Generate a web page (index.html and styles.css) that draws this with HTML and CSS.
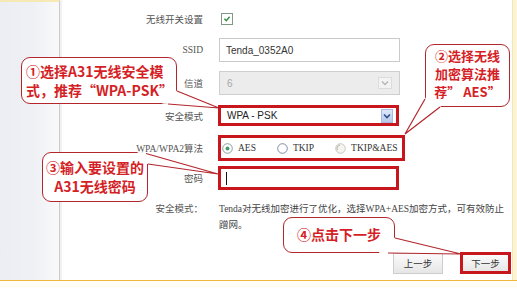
FILE: index.html
```html
<!DOCTYPE html>
<html lang="zh-CN">
<head>
    <meta charset="UTF-8">
    <link rel="stylesheet" href="styles.css">
</head>
<body>
    <div class="page">
        <div class="sidebar"></div>
        <div class="content">
            <div class="row row-switch">
                <span class="label">无线开关设置</span>
                <div class="field">
                    <span class="checkbox">
                        <svg width="12" height="12" viewBox="0 0 12 12">
                            <rect x="0.5" y="0.5" width="11" height="11" fill="#fff" stroke="#7f9a84"/>
                            <path d="M3.4 5.8 L5.3 7.8 L8.6 3.8" fill="none" stroke="#2f8c3f" stroke-width="1.4"/>
                        </svg>
                    </span>
                </div>
            </div>

            <div class="row row-ssid">
                <span class="label">SSID</span>
                <div class="field">
                    <div class="text-box">Tenda_0352A0</div>
                </div>
            </div>

            <div class="row row-channel">
                <span class="label">信道</span>
                <div class="field">
                    <div class="select select-disabled">
                        <span class="select-value">6</span>
                        <span class="select-arrow">
                            <svg width="8" height="6" viewBox="0 0 8 6"><path d="M1 1.5 L4 4.5 L7 1.5" fill="none" stroke="#b5b5b5" stroke-width="1.3"/></svg>
                        </span>
                    </div>
                </div>
            </div>

            <div class="row row-mode">
                <span class="label">安全模式</span>
                <div class="field">
                    <div class="mark mark-select">
                        <span class="select-value">WPA - PSK</span>
                        <span class="select-arrow select-arrow-active">
                            <svg width="8" height="6" viewBox="0 0 8 6"><path d="M1 1.5 L4 4.5 L7 1.5" fill="none" stroke="#2d4f8a" stroke-width="1.6"/></svg>
                        </span>
                    </div>
                </div>
            </div>

            <div class="row row-cipher">
                <span class="label">WPA/WPA2算法</span>
                <div class="field">
                    <div class="mark mark-radios">
                        <span class="radio-item">
                            <svg width="11" height="11" viewBox="0 0 11 11"><circle cx="5.5" cy="5.5" r="4.8" fill="#fff" stroke="#8a9ca2"/><circle cx="5.5" cy="5.5" r="2" fill="#4a9a70"/></svg>
                            AES
                        </span>
                        <span class="radio-item">
                            <svg width="11" height="11" viewBox="0 0 11 11"><circle cx="5.5" cy="5.5" r="4.8" fill="#fff" stroke="#7b8ea6"/></svg>
                            TKIP
                        </span>
                        <span class="radio-item">
                            <svg width="11" height="11" viewBox="0 0 11 11"><circle cx="5.5" cy="5.5" r="4.8" fill="#f4f4f0" stroke="#c9c9c0"/><path d="M2.4 7.2 A3.6 3.6 0 0 1 5 2" fill="none" stroke="#b0b0a6"/></svg>
                            TKIP&amp;AES
                        </span>
                    </div>
                </div>
            </div>

            <div class="row row-password">
                <span class="label">密码</span>
                <div class="field">
                    <div class="mark mark-input"><span class="caret"></span></div>
                </div>
            </div>

            <div class="row row-note">
                <span class="label">安全模式：</span>
                <div class="field note">Tenda对无线加密进行了优化，选择WPA+AES加密方式，可有效防止<br>蹭网。</div>
            </div>

            <div class="row row-buttons">
                <div class="buttons">
                    <span class="btn">上一步</span>
                    <span class="btn btn-next">下一步</span>
                </div>
            </div>
        </div>
        <div class="edge"></div>
    </div>

    <div class="callout callout-1">①选择A31无线安全模<br>式，推荐“WPA-PSK”</div>
    <div class="callout callout-2">②选择无线<br>加密算法推<br>荐” AES”</div>
    <div class="callout callout-3">③输入要设置的<br>A31无线密码</div>
    <div class="callout callout-4">④点击下一步</div>

    <svg class="tails" width="517" height="288" viewBox="0 0 517 288">
        <polygon points="172,89 219,108 162,103.5" fill="#fff"/>
        <polyline points="177,91 219,108 168,104" fill="none" stroke="#b3262c" stroke-width="1.2"/>

        <polygon points="427.4,94.8 405,134 444.2,103.8" fill="#fff"/>
        <polyline points="425,99 405,134 440,107" fill="none" stroke="#b3262c" stroke-width="1.2"/>

        <polygon points="137.4,151 218,174 139.6,162.8" fill="#fff"/>
        <polyline points="146,153.5 218,174 148,164" fill="none" stroke="#b3262c" stroke-width="1.2"/>

        <polygon points="387,236 461,254 379,253" fill="#fff"/>
        <polyline points="395,238 461,254 388,253" fill="none" stroke="#b3262c" stroke-width="1.2"/>
    </svg>
</body>
</html>
```

FILE: styles.css
```css
* {
    margin: 0;
    padding: 0;
    box-sizing: border-box;
}

body {
    position: relative;
    width: 517px;
    height: 288px;
    overflow: hidden;
    background: #fffdf6;
    font-family: "Liberation Serif", "Noto Sans CJK SC", serif;
    font-size: 9.5px;
    color: #555;
}

.page {
    display: flex;
    height: 281px;
    background: #fff;
    border-bottom: 1px solid #f1b63e;
}

.sidebar {
    width: 60px;
    background: linear-gradient(90deg, #eceef3 0%, #eef0f4 55%, #f9f9fb 100%);
    border-top: 2px solid #f6e9b3;
    border-right: 1px solid #cbcbcb;
}

.content {
    flex: 1;
    display: flex;
    flex-direction: column;
    padding-top: 7px;
    border-left: 2px solid #f1f1f1;
}

.edge {
    width: 5px;
    background: #fbf3d6;
    border-left: 1px solid #f3e6b5;
}

.row {
    display: grid;
    grid-template-columns: 141px 1fr;
    column-gap: 16px;
    align-items: center;
    height: 24px;
}

.row-ssid { margin-top: 7px; }
.row-channel { margin-top: 9px; }
.row-mode { margin-top: 10px; height: 21px; }
.row-cipher { margin-top: 9px; height: 26px; }
.row-password { margin-top: 5px; }

.row-note {
    margin-top: 11px;
    height: 32px;
    align-items: start;
    line-height: 16px;
}

.row-buttons {
    display: flex;
    justify-content: flex-end;
    margin-top: 19px;
    height: 22px;
}

.label {
    text-align: right;
    white-space: nowrap;
}

.field {
    display: flex;
    align-items: center;
}

.checkbox {
    display: flex;
    margin-left: 2px;
}

.text-box {
    display: flex;
    align-items: center;
    width: 181px;
    height: 24px;
    padding-left: 6px;
    border: 1px solid #cacaca;
    font-family: "Liberation Sans", sans-serif;
    font-size: 10px;
    color: #333;
}

.select {
    display: flex;
    align-items: center;
    justify-content: space-between;
    width: 181px;
    height: 24px;
    padding: 0 7px;
    border: 1px solid #cfcfcf;
    font-family: "Liberation Sans", sans-serif;
    font-size: 10px;
}

.select-disabled {
    background: #ececec;
    color: #a8a8a8;
}

.select-arrow {
    display: flex;
    align-items: center;
    justify-content: center;
    width: 14px;
    height: 12px;
    background: #f3f3f3;
    border: 1px solid #dcdcdc;
}

.mark {
    margin-left: -1px;
    border: 3px solid #c8161d;
    background: #fff;
}

.mark-select {
    display: flex;
    align-items: center;
    justify-content: space-between;
    width: 181px;
    height: 21px;
    padding: 0 3px 0 6px;
    font-family: "Liberation Sans", sans-serif;
    font-size: 10px;
    color: #222;
}

.select-arrow-active {
    width: 12px;
    height: 14px;
    background: linear-gradient(#dfe8f7, #b7c9ea);
    border: 1px solid #a9bbdc;
}

.mark-radios {
    display: flex;
    align-items: center;
    width: 187px;
    height: 26px;
    padding-left: 1px;
    overflow: hidden;
    white-space: nowrap;
    color: #333;
    font-size: 9.5px;
}

.radio-item {
    display: flex;
    align-items: center;
    gap: 5px;
    margin-right: 21px;
}

.mark-input {
    display: flex;
    align-items: center;
    width: 181px;
    height: 24px;
    padding-left: 5px;
}

.caret {
    width: 1px;
    height: 13px;
    background: #111;
}

.note {
    display: block;
    white-space: nowrap;
    color: #444;
}

.buttons {
    display: flex;
    align-items: center;
    gap: 17px;
    margin-right: 1px;
}

.btn {
    display: flex;
    align-items: center;
    justify-content: center;
    width: 50px;
    height: 21px;
    background: linear-gradient(#fbfbfb, #e6e6e6);
    border: 1px solid #cdcdcd;
    font-family: "Noto Sans CJK SC", sans-serif;
    font-size: 9.5px;
    color: #333;
}

.btn-next {
    width: 51px;
    height: 22px;
    border: 3px solid #c8161d;
}

.callout {
    position: absolute;
    background: #fff;
    border: 1.5px solid #b3262c;
    border-radius: 9px;
    font-family: "Noto Sans CJK SC", sans-serif;
    font-weight: bold;
    font-size: 14px;
    color: #d51f27;
    white-space: nowrap;
}

.callout-1 {
    left: 21px;
    top: 57px;
    width: 156px;
    height: 47px;
    padding: 4px 0 0 4px;
    line-height: 19px;
}

.callout-2 {
    left: 425px;
    top: 44px;
    width: 85px;
    height: 63px;
    padding-top: 2px;
    font-size: 13px;
    line-height: 18px;
    text-align: center;
}

.callout-3 {
    left: 42px;
    top: 152px;
    width: 106px;
    height: 50px;
    padding-top: 5px;
    line-height: 19px;
    text-align: center;
}

.callout-4 {
    left: 283px;
    top: 217px;
    width: 112px;
    height: 36px;
    line-height: 33px;
    text-align: center;
}

.tails {
    position: absolute;
    left: 0;
    top: 0;
    pointer-events: none;
}
```
